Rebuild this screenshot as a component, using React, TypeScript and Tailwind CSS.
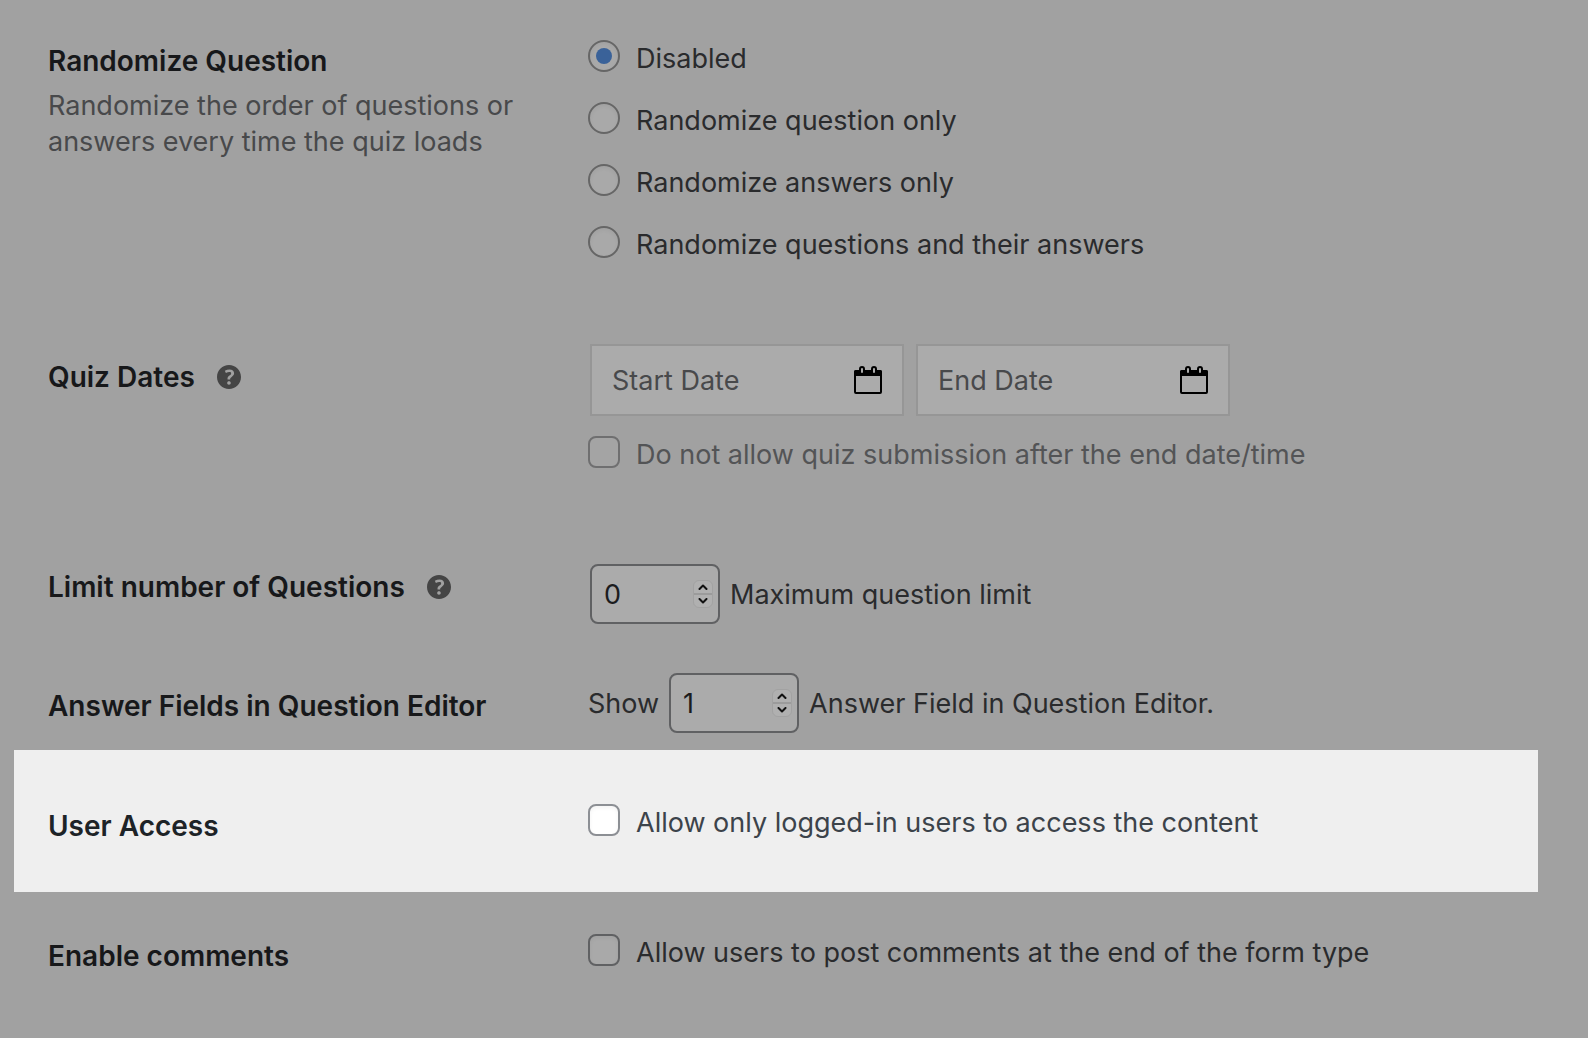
import { useState } from 'react';
import type { ReactNode } from 'react';

const font = "font-['Inter','Liberation_Sans',sans-serif]";

function HelpIcon() {
  return (
    <svg viewBox="3 3 14 14" className="size-6" fill="#454545" aria-hidden="true">
      <path d="M17 10c0-3.87-3.14-7-7-7-3.87 0-7 3.13-7 7s3.13 7 7 7c3.86 0 7-3.13 7-7zm-6.3 1.48H9.14v-.43c0-.38.08-.7.24-.98s.46-.57.88-.89c.41-.29.68-.53.81-.71.14-.18.2-.39.2-.62 0-.25-.09-.44-.28-.58-.19-.13-.45-.19-.79-.19-.58 0-1.25.19-2 .57l-.64-1.28c.87-.49 1.8-.74 2.77-.74.81 0 1.45.2 1.92.58.48.39.71.91.71 1.55 0 .43-.09.8-.29 1.11-.19.32-.57.67-1.11 1.06-.38.28-.61.49-.71.63-.1.15-.15.34-.15.57v.35zm-1.47 2.74c-.18-.17-.27-.42-.27-.73 0-.33.08-.58.26-.75s.43-.25.77-.25c.32 0 .57.09.75.26s.27.42.27.74c0 .3-.09.55-.27.72-.18.18-.43.27-.75.27-.33 0-.58-.09-.76-.27z" />
    </svg>
  );
}

function CalendarIcon() {
  return (
    <svg viewBox="0 0 28 28" className="size-7" aria-hidden="true">
      <rect x="1" y="5" width="26" height="22" rx="1" fill="none" stroke="#000" strokeWidth="2" />
      <rect x="0" y="4" width="28" height="6" rx="2" fill="#000" />
      <rect x="6" y="1" width="4" height="7" rx="2" fill="#ababab" stroke="#000" strokeWidth="2" />
      <rect x="18" y="1" width="4" height="7" rx="2" fill="#ababab" stroke="#000" strokeWidth="2" />
    </svg>
  );
}

type RowProps = {
  title: string;
  help?: boolean;
  description?: string;
  className: string;
  titleClass: string;
  children: ReactNode;
};

function Row({ title, help, description, className, titleClass, children }: RowProps) {
  return (
    <section className={`grid grid-cols-[540px_1fr] items-start ${className}`}>
      <div className={titleClass}>
        <div className="flex items-center">
          <h2 className="text-[28px] leading-9 font-semibold">{title}</h2>
          {help && (
            <button type="button" aria-label={`Help: ${title}`} className="ml-[22px]">
              <HelpIcon />
            </button>
          )}
        </div>
        {description && <p className="mt-[9px] max-w-[490px] text-[#48494b]">{description}</p>}
      </div>
      <div>{children}</div>
    </section>
  );
}

function DateField({ label }: { label: string }) {
  return (
    <div className="flex h-[72px] w-[314px] items-center border-2 border-[#969696] bg-[#ababab] px-5">
      <input
        type="text"
        aria-label={label}
        placeholder={label}
        className="min-w-0 flex-1 bg-transparent pt-0.5 outline-none placeholder:text-[#48494b]"
      />
      <button type="button" aria-label={`Pick ${label}`}>
        <CalendarIcon />
      </button>
    </div>
  );
}

function NumberField({ id, initial }: { id: string; initial: number }) {
  const [value, setValue] = useState(initial);

  return (
    <div className="flex h-[60px] w-[130px] items-center rounded-lg border-2 border-[#606163] bg-[#ababab] pr-[5px] pl-3">
      <input
        id={id}
        type="number"
        value={value}
        onChange={e => setValue(Number(e.target.value))}
        className="min-w-0 flex-1 appearance-none bg-transparent pt-0.5 text-[#1b1c1e] outline-none [-moz-appearance:textfield] [&::-webkit-inner-spin-button]:appearance-none"
      />
      <div className="flex h-7 w-5 flex-col divide-y-2 divide-[#9b9b9b] rounded-md border border-[#a2a2a2] bg-[#b0b0b0]">
        <button type="button" aria-label="Increase" className="flex flex-1 items-center justify-center" onClick={() => setValue(value + 1)}>
          <svg viewBox="0 0 10 6" className="h-[6px] w-[10px]" fill="none" stroke="#111" strokeWidth="2" strokeLinecap="round" strokeLinejoin="round">
            <path d="M1.5 5 5 1.5 8.5 5" />
          </svg>
        </button>
        <button type="button" aria-label="Decrease" className="flex flex-1 items-center justify-center" onClick={() => setValue(value - 1)}>
          <svg viewBox="0 0 10 6" className="h-[6px] w-[10px]" fill="none" stroke="#111" strokeWidth="2" strokeLinecap="round" strokeLinejoin="round">
            <path d="M1.5 1 5 4.5 8.5 1" />
          </svg>
        </button>
      </div>
    </div>
  );
}

type CheckProps = { label: string; boxClass: string; textClass: string; disabled?: boolean };

function Check({ label, boxClass, textClass, disabled }: CheckProps) {
  return (
    <label className={`flex w-fit items-center gap-4 ${textClass}`}>
      <input
        type="checkbox"
        disabled={disabled}
        className={`mb-1.5 size-8 shrink-0 appearance-none rounded-lg border-2 checked:bg-[#3a6299] ${boxClass}`}
      />
      {label}
    </label>
  );
}

const orderOptions = [
  'Disabled',
  'Randomize question only',
  'Randomize answers only',
  'Randomize questions and their answers',
];

export default function App() {
  const [order, setOrder] = useState('Disabled');

  return (
    <main className={`min-h-screen bg-[#a1a1a1] pt-10 pr-[50px] pb-16 pl-[14px] text-[27px] leading-9 text-[#2a2b2d] ${font}`}>
      <Row
        title="Randomize Question"
        description="Randomize the order of questions or answers every time the quiz loads"
        className="pl-[34px]"
        titleClass="pt-[3px] text-[#17181a]"
      >
        <div className="flex flex-col gap-6" role="radiogroup" aria-label="Randomize Question">
          {orderOptions.map(option => (
            <label key={option} className="flex w-fit items-center gap-4">
              <input
                type="radio"
                name="order"
                checked={order === option}
                onChange={() => setOrder(option)}
                className="mb-1.5 flex size-8 shrink-0 appearance-none items-center justify-center rounded-full border-2 border-[#666] bg-[#a9a9a9] inset-shadow-sm before:size-4 before:rounded-full checked:before:bg-[#3a6299]"
              />
              {option}
            </label>
          ))}
        </div>
      </Row>

      <Row title="Quiz Dates" help className="mt-20 pl-[34px]" titleClass="pt-[15px] text-[#17181a]">
        <div className="flex gap-3 pl-[2px]">
          <DateField label="Start Date" />
          <DateField label="End Date" />
        </div>
        <div className="mt-5">
          <Check
            label="Do not allow quiz submission after the end date/time"
            boxClass="border-[#6f6f70] bg-[#a4a4a4]"
            textClass="text-[#535456]"
            disabled
          />
        </div>
      </Row>

      <Row title="Limit number of Questions" help className="mt-[90px] pl-[34px]" titleClass="pt-[5px] text-[#17181a]">
        <div className="flex items-center gap-[10px] pl-[2px]">
          <NumberField id="limit" initial={0} />
          <label htmlFor="limit" className="pt-0.5">Maximum question limit</label>
        </div>
      </Row>

      <Row title="Answer Fields in Question Editor" className="mt-[49px] pl-[34px]" titleClass="pt-[15px] text-[#17181a]">
        <div className="flex items-center gap-[10px]">
          <label htmlFor="fields" className="pt-0.5">Show</label>
          <NumberField id="fields" initial={1} />
          <span className="pt-0.5">Answer Field in Question Editor.</span>
        </div>
      </Row>

      <Row title="User Access" className="mt-[17px] bg-[#efefef] pt-[54px] pb-12 pl-[34px]" titleClass="pt-1 text-[#1d2327]">
        <Check
          label="Allow only logged-in users to access the content"
          boxClass="border-[#8c8f94] bg-white inset-shadow-sm"
          textClass="text-[#3c434a]"
        />
      </Row>

      <Row title="Enable comments" className="mt-[42px] pl-[34px]" titleClass="pt-1 text-[#17181a]">
        <Check
          label="Allow users to post comments at the end of the form type"
          boxClass="border-[#606163] bg-[#a9a9a9] inset-shadow-sm"
          textClass="text-[#2a2b2d]"
        />
      </Row>
    </main>
  );
}
